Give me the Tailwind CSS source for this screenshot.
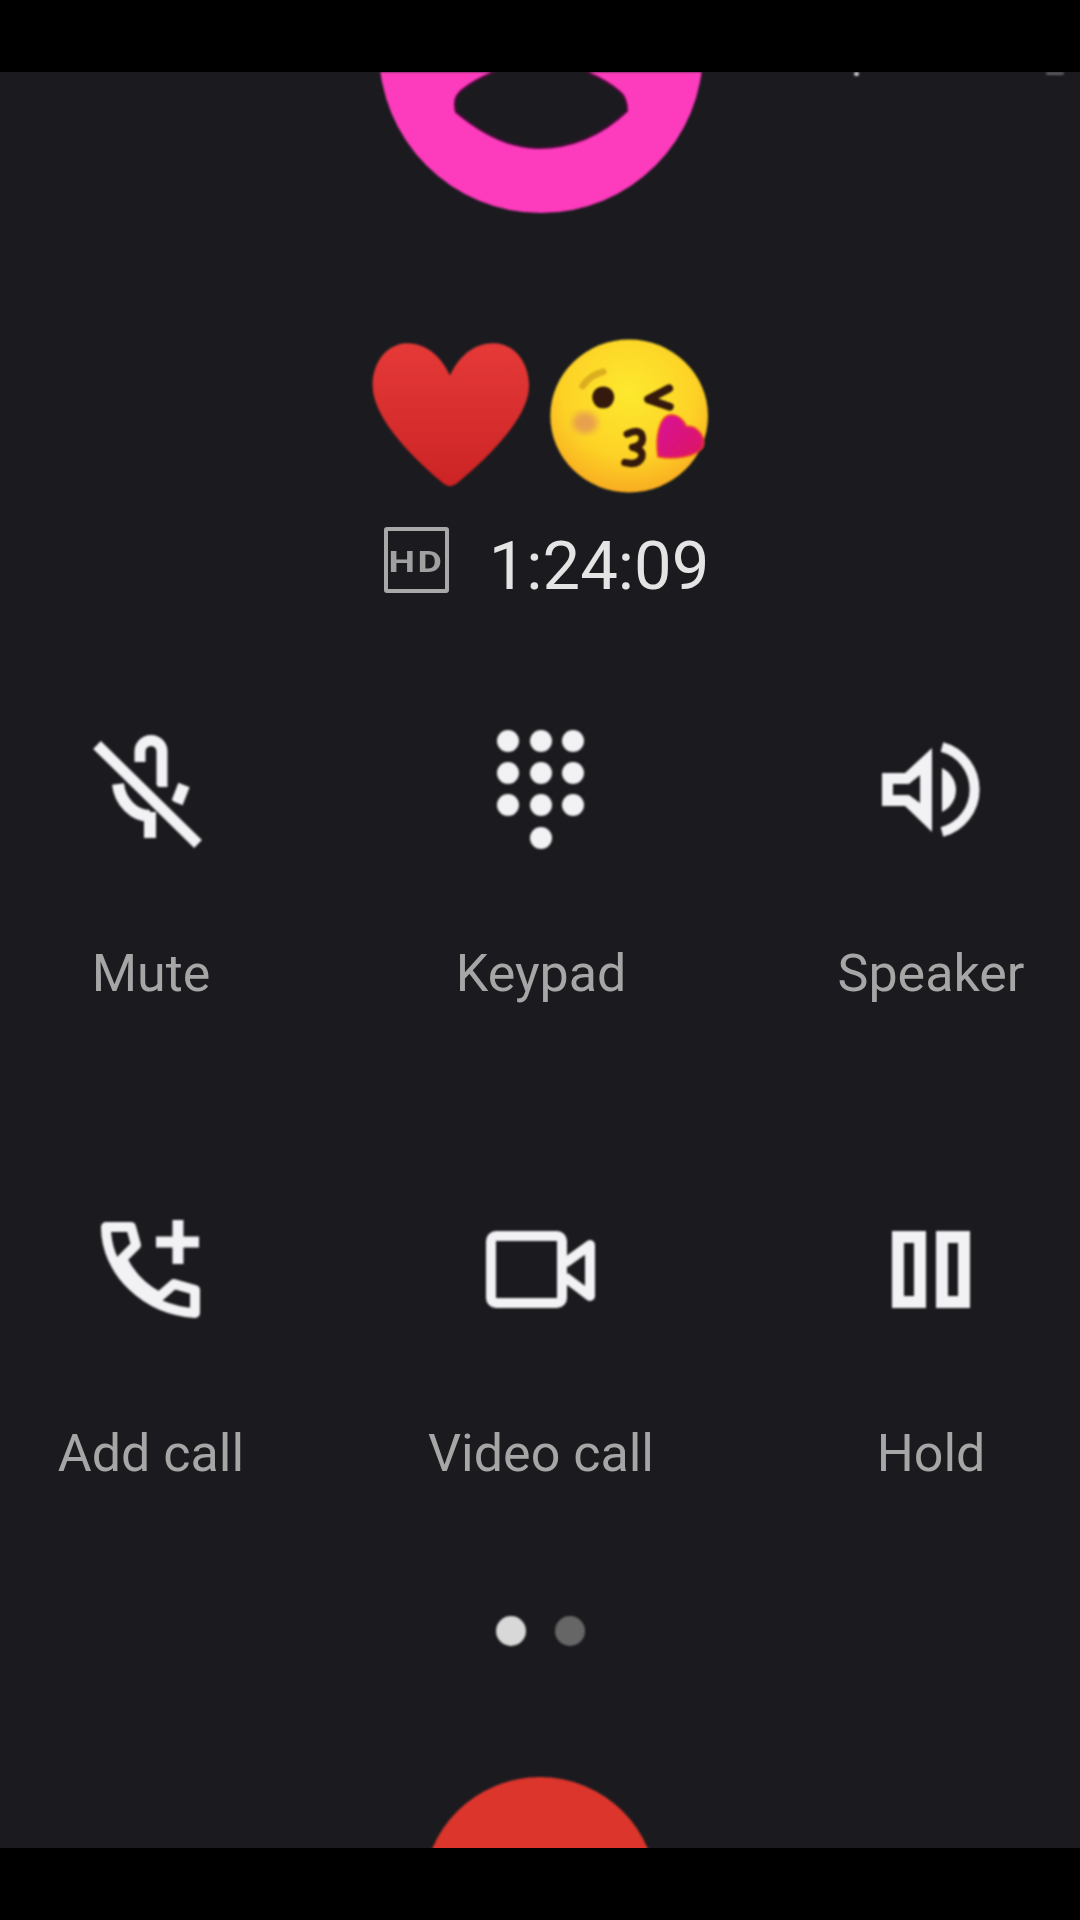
<!DOCTYPE html>
<html>
<head>
<meta charset="utf-8">
<script src="https://cdn.jsdelivr.net/npm/@tailwindcss/browser@4"></script>
</head>
<body class="bg-black">
<div class="w-[1080px] h-[1920px] bg-black pt-[72px] font-['Roboto',sans-serif]">
  <main class="relative w-full h-[1776px] bg-[#1b1b1f] overflow-hidden flex flex-col items-center">
    <span class="absolute left-[854px] top-0 w-[5px] h-[4px] rounded-full bg-white/80 blur-[1px]"></span>
    <span class="absolute left-[1046px] top-0 w-[18px] h-[3px] rounded-full bg-white/30 blur-[1px]"></span>

    <svg class="block shrink-0 blur-[1px]" width="1080" height="141" viewBox="0 72 1080 141">
      <circle cx="541" cy="51" r="162" fill="#fd3bbd"/>
      <path d="M455 103Q455 96 462 90Q490 68 541 60Q592 68 620 92Q627 98 627 111C605 132 575 148 538 148C508 148 480 132 456 112Q455 108 455 103Z" fill="#1b1b1f" stroke="#4a0a3a" stroke-width="2"/>
    </svg>

    <div class="mt-[126px] h-[154px] flex items-start justify-center gap-[21px] shrink-0">
      <svg class="mt-[3px] blur-[1px]" width="157" height="145" viewBox="95 95 473 435">
        <defs><linearGradient id="h" x1="0" y1="0" x2="0" y2="1"><stop offset="0" stop-color="#e53a38"/><stop offset="1" stop-color="#cc2325"/></linearGradient></defs>
        <path d="M330 195C300 130 250 95 195 98C130 105 95 165 97 230C100 330 230 455 312 522Q330 535 348 522C430 455 565 330 568 230C570 165 530 100 465 98C410 95 360 130 330 195Z" fill="url(#h)"/>
      </svg>
      <svg class="blur-[0.8px]" width="158" height="154" viewBox="630 88 475 460">
        <defs>
          <radialGradient id="f" cx="0.5" cy="0.35" r="0.7"><stop offset="0" stop-color="#fde92e"/><stop offset="0.6" stop-color="#fdd226"/><stop offset="1" stop-color="#f8a51f"/></radialGradient>
          <linearGradient id="k" x1="0" y1="0" x2="1" y2="1"><stop offset="0" stop-color="#d9129a"/><stop offset="1" stop-color="#dc1560"/></linearGradient>
          <filter id="b"><feGaussianBlur stdDeviation="10"/></filter>
        </defs>
        <ellipse cx="868" cy="318" rx="237" ry="230" fill="url(#f)"/>
        <ellipse cx="735" cy="338" rx="38" ry="32" fill="#e8a04e" filter="url(#b)"/>
        <path d="M728 228Q750 195 790 185" fill="none" stroke="#dcae1e" stroke-width="20" stroke-linecap="round"/>
        <circle cx="790" cy="262" r="33" fill="#35190c"/>
        <path d="M988 235L925 268L990 290" fill="none" stroke="#35190c" stroke-width="24" stroke-linecap="round" stroke-linejoin="round"/>
        <path d="M862 372Q905 352 908 385Q908 408 878 412Q912 420 906 442Q895 468 855 458" fill="none" stroke="#35190c" stroke-width="22" stroke-linecap="round" stroke-linejoin="round"/>
        <path d="M955 440C945 380 960 310 1000 315C1030 320 1040 350 1040 350C1070 345 1100 380 1090 410C1075 440 1000 450 955 440Z" fill="url(#k)" stroke="#f04030" stroke-width="5"/>
      </svg>
    </div>

    <div class="mt-[34px] h-[66px] pl-[13px] flex items-center gap-[40px] shrink-0">
      <div class="w-[65px] h-[66px] border-[4px] border-[#a8a8a8] rounded-[3px] flex items-center justify-center text-[#a0a0a0] text-[30px] leading-none font-bold blur-[0.7px]"><span class="scale-x-[1.25] tracking-[2px] mt-[4px]">HD</span></div>
      <div class="mt-[12px] text-[67px] leading-none text-[#e4e4e4] blur-[0.6px]">1:24:09</div>
    </div>

    <div class="mt-[131px] w-full pl-[21px] pr-[19px] grid grid-cols-3 gap-x-[130px] gap-y-[200px] shrink-0 text-[#a6a6a6] text-[52px] leading-[60px] text-center">
      <div class="flex flex-col items-center gap-[90px]">
        <svg class="blur-[1px]" width="130" height="130" viewBox="86 724 130 130" fill="none" stroke="#f2f2f4">
          <path d="M140 762V751.5a11 11 0 0 1 22 0V787" stroke-width="11"/>
          <path d="M118 784C120 802 134 816 150 816" stroke-width="12"/>
          <path d="M150 812V838" stroke-width="12"/>
          <path d="M184 785L177 803" stroke-width="12"/>
          <path d="M106 743L202 836" stroke="#1b1b1f" stroke-width="10"/>
          <path d="M97 745L198 844" stroke-width="11"/>
        </svg>
        <div class="blur-[0.5px]">Mute</div>
      </div>
      <div class="flex flex-col items-center gap-[90px]">
        <svg class="blur-[1px]" width="130" height="130" viewBox="476 724 130 130" fill="#f2f2f4">
          <circle cx="508" cy="741" r="11"/><circle cx="541" cy="741" r="11"/><circle cx="573" cy="741" r="11"/>
          <circle cx="508" cy="773" r="11"/><circle cx="541" cy="773" r="11"/><circle cx="573" cy="773" r="11"/>
          <circle cx="508" cy="805" r="11"/><circle cx="541" cy="805" r="11"/><circle cx="573" cy="805" r="11"/>
          <circle cx="541" cy="838" r="11"/>
        </svg>
        <div class="blur-[0.5px]">Keypad</div>
      </div>
      <div class="flex flex-col items-center gap-[90px]">
        <svg class="blur-[1px]" width="130" height="130" viewBox="866 724 130 130" fill="#f2f2f4">
          <path fill-rule="evenodd" d="M882 773H905L932 748V832L905 806H882ZM893 784V795H909L920 803V775L909 784Z"/>
          <path d="M942 768A24.3 24.3 0 0 1 942 812Z"/>
          <path d="M942 747A44 44 0 0 1 942 832" fill="none" stroke="#f2f2f4" stroke-width="10"/>
        </svg>
        <div class="blur-[0.5px]">Speaker</div>
      </div>
      <div class="flex flex-col items-center gap-[90px]">
        <svg class="blur-[1px]" width="130" height="130" viewBox="86 1204 130 130" fill="none" stroke="#f2f2f4">
          <path d="M106 1227H131L136 1245L122 1259C130 1275 142 1288 159 1297L174 1284L195 1290V1313C146 1310 106 1272 106 1227Z" stroke-width="10" stroke-linejoin="round"/>
          <path d="M156 1242H199M178 1220V1264" stroke-width="11"/>
        </svg>
        <div class="blur-[0.5px]">Add call</div>
      </div>
      <div class="flex flex-col items-center gap-[90px]">
        <svg class="blur-[1px]" width="130" height="130" viewBox="476 1204 130 130" fill="none" stroke="#f2f2f4">
          <rect x="491" y="1236" width="71" height="67" rx="5" stroke-width="10"/>
          <path d="M565 1263L590 1245V1296L565 1277" stroke-width="10" stroke-linejoin="round"/>
        </svg>
        <div class="blur-[0.5px]">Video call</div>
      </div>
      <div class="flex flex-col items-center gap-[90px]">
        <svg class="blur-[1px]" width="130" height="130" viewBox="866 1204 130 130" fill="none" stroke="#f2f2f4" stroke-width="12">
          <rect x="898" y="1237" width="22" height="65"/>
          <rect x="942" y="1237" width="22" height="65"/>
        </svg>
        <div class="blur-[0.5px]">Hold</div>
      </div>
    </div>

    <div class="mt-[132px] flex gap-[29px] shrink-0 blur-[1px]">
      <span class="w-[30px] h-[30px] rounded-full bg-[#d8d8d8]"></span>
      <span class="w-[30px] h-[30px] rounded-full bg-[#666666]"></span>
    </div>

    <div class="mt-[131px] w-[234px] h-[234px] rounded-full bg-[#dc352c] shrink-0 blur-[1px]"></div>
  </main>
</div>
</body>
</html>
